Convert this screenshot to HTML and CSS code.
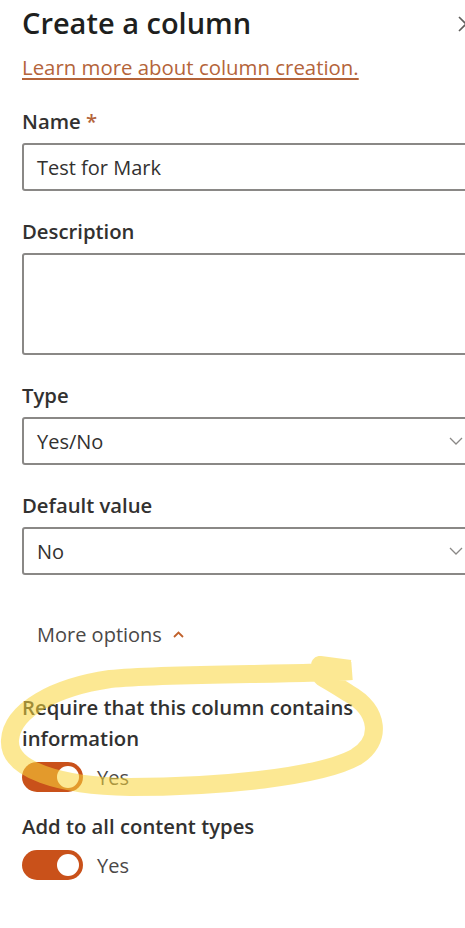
FILE: index.html
```html
<!DOCTYPE html>
<html lang="en">
<head>
<meta charset="utf-8">
<title>Create a column</title>
<link rel="stylesheet" href="styles.css">
</head>
<body>
<div class="panel">
  <header class="head">
    <h1 class="title">Create a column</h1>
    <span class="close" aria-label="Close">
      <svg width="16" height="16" viewBox="0 0 16 16"><path d="M1 1 L15 15 M15 1 L1 15" stroke="#605e5c" stroke-width="1.6" fill="none"/></svg>
    </span>
  </header>
  <a class="learn" href="#">Learn more about column creation.</a>

  <div class="field">
    <div class="label">Name <span class="req">*</span></div>
    <div class="box input">Test for Mark</div>
  </div>

  <div class="field">
    <div class="label">Description</div>
    <div class="box textarea"><span class="grip"></span></div>
  </div>

  <div class="field">
    <div class="label">Type</div>
    <div class="box input select">Yes/No
      <svg class="chev" width="14" height="8" viewBox="0 0 14 8"><path d="M1 1 L7 7 L13 1" stroke="#8a8886" stroke-width="1.3" fill="none"/></svg>
    </div>
  </div>

  <div class="field">
    <div class="label">Default value</div>
    <div class="box input select">No
      <svg class="chev" width="14" height="8" viewBox="0 0 14 8"><path d="M1 1 L7 7 L13 1" stroke="#8a8886" stroke-width="1.3" fill="none"/></svg>
    </div>
  </div>

  <div class="more">More options
    <svg width="11" height="7" viewBox="0 0 11 7"><path d="M1 6 L5.5 1.5 L10 6" stroke="#c0612b" stroke-width="1.8" fill="none"/></svg>
  </div>

  <div class="tfield first">
    <div class="label">Require that this column contains information</div>
    <div class="toggle-row"><span class="toggle"><span class="knob"></span></span><span class="yes">Yes</span></div>
  </div>

  <div class="tfield">
    <div class="label">Add to all content types</div>
    <div class="toggle-row"><span class="toggle"><span class="knob"></span></span><span class="yes">Yes</span></div>
  </div>

  <svg class="highlight" width="400" height="150" viewBox="0 0 400 150">
    <path d="M352 16 C300 20 170 18 110 24 C55 32 12 55 10 85 C8 115 60 131 130 132 C220 132 320 122 356 102 C382 86 380 56 348 38 C336 30 330 27 322 22 L320 10 L350 14"
      stroke="rgb(250,215,60)" stroke-width="18" fill="none" stroke-linecap="butt" stroke-linejoin="round"/>
  </svg>
</div>
</body>
</html>
```
FILE: styles.css
```css
html, body {
  margin: 0;
  padding: 0;
  overflow: hidden;
  background: #ffffff;
}
body {
  font-family: "Open Sans", "Noto Sans", sans-serif;
  color: #323130;
}
.panel {
  position: relative;
  width: 478px;
  padding: 0 0 0 22px;
}
.head {
  display: flex;
  align-items: center;
  justify-content: space-between;
  height: 46px;
}
.title {
  margin: 0;
  font-size: 29px;
  font-weight: 600;
  color: #201f1e;
  line-height: 46px;
}
.close {
  display: flex;
  margin-right: 26px;
  margin-top: 2px;
}
.learn {
  display: block;
  width: max-content;
  margin-top: 6px;
  font-size: 20.4px;
  line-height: 30px;
  color: #b4643a;
  text-decoration: underline;
  text-underline-offset: 3px;
}
.field + .field {
  margin-top: 25px;
}
.learn + .field { margin-top: 24px; }
.label {
  font-size: 20.3px;
  font-weight: 600;
  line-height: 30px;
  color: #323130;
  margin-bottom: 7px;
}
.req { color: #b4643a; }
.box {
  box-sizing: border-box;
  width: 460px;
  border: 2px solid #8a8886;
  border-radius: 3px;
  background: #fff;
}
.input {
  height: 48px;
  padding: 0 13px;
  display: flex;
  align-items: center;
  font-size: 20px;
  color: #323130;
}
.textarea {
  height: 102px;
  position: relative;
}
.grip {
  position: absolute;
  right: 1px;
  bottom: 2px;
  width: 2px;
  height: 2px;
  background: #8a8886;
}
.select {
  justify-content: space-between;
}
.chev {
  margin-right: 4px;
}
.more {
  display: flex;
  align-items: center;
  gap: 11px;
  margin: 39px 0 0 15px;
  height: 40px;
  font-size: 20px;
  color: #4a4847;
}
.more svg { margin-top: 1px; }
.tfield.first {
  margin-top: 38px;
}
.tfield {
  margin-top: 19px;
}
.tfield .label {
  margin-bottom: 8px;
  line-height: 31px;
  width: 360px;
}
.toggle-row {
  display: flex;
  align-items: center;
  gap: 14px;
}
.toggle {
  box-sizing: border-box;
  width: 61px;
  height: 30px;
  border-radius: 15px;
  background: #c9511a;
  display: flex;
  align-items: center;
  justify-content: flex-end;
  padding-right: 4px;
}
.knob {
  width: 22px;
  height: 22px;
  border-radius: 50%;
  background: #ffffff;
}
.yes {
  font-size: 20px;
  color: #4a4847;
}
.highlight {
  position: absolute;
  left: 0;
  top: 655px;
  opacity: 0.55;
  pointer-events: none;
}
```
